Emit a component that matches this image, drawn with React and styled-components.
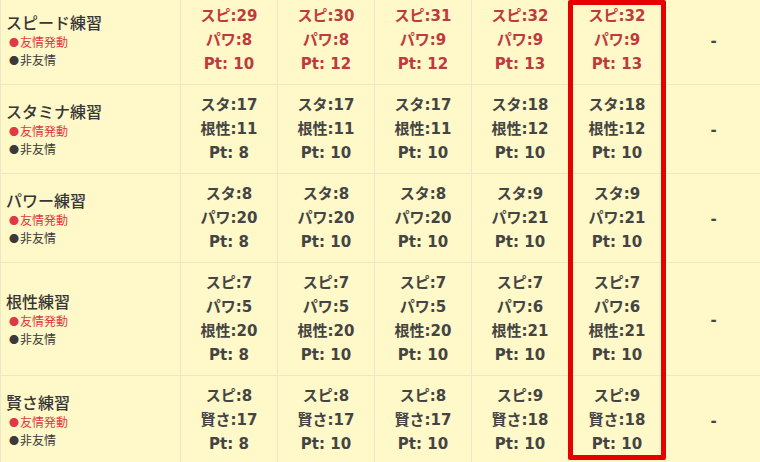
import React from "react";
import styled, { createGlobalStyle } from "styled-components";

const GlobalStyle = createGlobalStyle`
  html, body {
    margin: 0;
    padding: 0;
    background: #fff8c8;
    overflow: hidden;
  }
  body {
    font-family: "DejaVu Sans", "Noto Sans CJK JP", sans-serif;
  }
`;

const rows = [
  {
    title: "スピード練習",
    friend: true,
    cells: [
      ["スピ:29", "パワ:8", "Pt: 10"],
      ["スピ:30", "パワ:8", "Pt: 12"],
      ["スピ:31", "パワ:9", "Pt: 12"],
      ["スピ:32", "パワ:9", "Pt: 13"],
      ["スピ:32", "パワ:9", "Pt: 13"],
    ],
  },
  {
    title: "スタミナ練習",
    cells: [
      ["スタ:17", "根性:11", "Pt: 8"],
      ["スタ:17", "根性:11", "Pt: 10"],
      ["スタ:17", "根性:11", "Pt: 10"],
      ["スタ:18", "根性:12", "Pt: 10"],
      ["スタ:18", "根性:12", "Pt: 10"],
    ],
  },
  {
    title: "パワー練習",
    cells: [
      ["スタ:8", "パワ:20", "Pt: 8"],
      ["スタ:8", "パワ:20", "Pt: 10"],
      ["スタ:8", "パワ:20", "Pt: 10"],
      ["スタ:9", "パワ:21", "Pt: 10"],
      ["スタ:9", "パワ:21", "Pt: 10"],
    ],
  },
  {
    title: "根性練習",
    cells: [
      ["スピ:7", "パワ:5", "根性:20", "Pt: 8"],
      ["スピ:7", "パワ:5", "根性:20", "Pt: 10"],
      ["スピ:7", "パワ:5", "根性:20", "Pt: 10"],
      ["スピ:7", "パワ:6", "根性:21", "Pt: 10"],
      ["スピ:7", "パワ:6", "根性:21", "Pt: 10"],
    ],
  },
  {
    title: "賢さ練習",
    cells: [
      ["スピ:8", "賢さ:17", "Pt: 8"],
      ["スピ:8", "賢さ:17", "Pt: 10"],
      ["スピ:8", "賢さ:17", "Pt: 10"],
      ["スピ:9", "賢さ:18", "Pt: 10"],
      ["スピ:9", "賢さ:18", "Pt: 10"],
    ],
  },
];

const Wrap = styled.div`
  position: relative;
  width: 760px;
  height: 462px;
  overflow: hidden;
`;

const Table = styled.table`
  border-collapse: collapse;
  table-layout: fixed;
  width: 761px;
  margin-top: -5px;
  background: #fff8c8;
`;

const LabelCol = styled.col`
  width: 180px;
`;

const ValueCol = styled.col`
  width: 97px;
`;

const DashCol = styled.col`
  width: 96px;
`;

const Cell = styled.td`
  border: 1px solid #ede7c6;
  padding: 8px 0;
  vertical-align: middle;
  text-align: center;
`;

const LabelCell = styled(Cell)`
  text-align: left;
  padding-left: 5px;
`;

const Title = styled.div`
  font-family: "Noto Sans CJK JP", sans-serif;
  font-size: 16px;
  font-weight: 500;
  line-height: 21px;
  color: #363636;
`;

const Sub = styled.div`
  font-family: "Noto Sans CJK JP", sans-serif;
  font-size: 12px;
  line-height: 17px;
  padding-left: 3px;
  color: ${({ $red }) => ($red ? "#e03845" : "#3a3a3a")};
  &::before {
    content: "●";
    font-size: 10px;
    margin-right: 1px;
  }
`;

const Line = styled.div`
  font-size: 15px;
  line-height: 24px;
  font-weight: bold;
  color: ${({ $red }) => ($red ? "#c0393d" : "#444444")};
`;

const Dash = styled.span`
  font-size: 15px;
  font-weight: bold;
  color: #444444;
`;

// red annotation frame drawn over the 5th value column
const Highlight = styled.div`
  position: absolute;
  left: 568px;
  top: 0;
  width: 98px;
  height: 460px;
  box-sizing: border-box;
  border: 5px solid #e60000;
  border-radius: 2px;
  pointer-events: none;
`;

export default function App() {
  return (
    <>
      <GlobalStyle />
      <Wrap>
        <Table>
          <colgroup>
            <LabelCol />
            <ValueCol />
            <ValueCol />
            <ValueCol />
            <ValueCol />
            <ValueCol />
            <DashCol />
          </colgroup>
          <tbody>
            {rows.map((row) => (
              <tr key={row.title}>
                <LabelCell>
                  <Title>{row.title}</Title>
                  <Sub $red>友情発動</Sub>
                  <Sub>非友情</Sub>
                </LabelCell>
                {row.cells.map((lines, i) => (
                  <Cell key={i}>
                    {lines.map((l) => (
                      <Line key={l} $red={row.friend}>
                        {l}
                      </Line>
                    ))}
                  </Cell>
                ))}
                <Cell>
                  <Dash>-</Dash>
                </Cell>
              </tr>
            ))}
          </tbody>
        </Table>
        <Highlight />
      </Wrap>
    </>
  );
}
